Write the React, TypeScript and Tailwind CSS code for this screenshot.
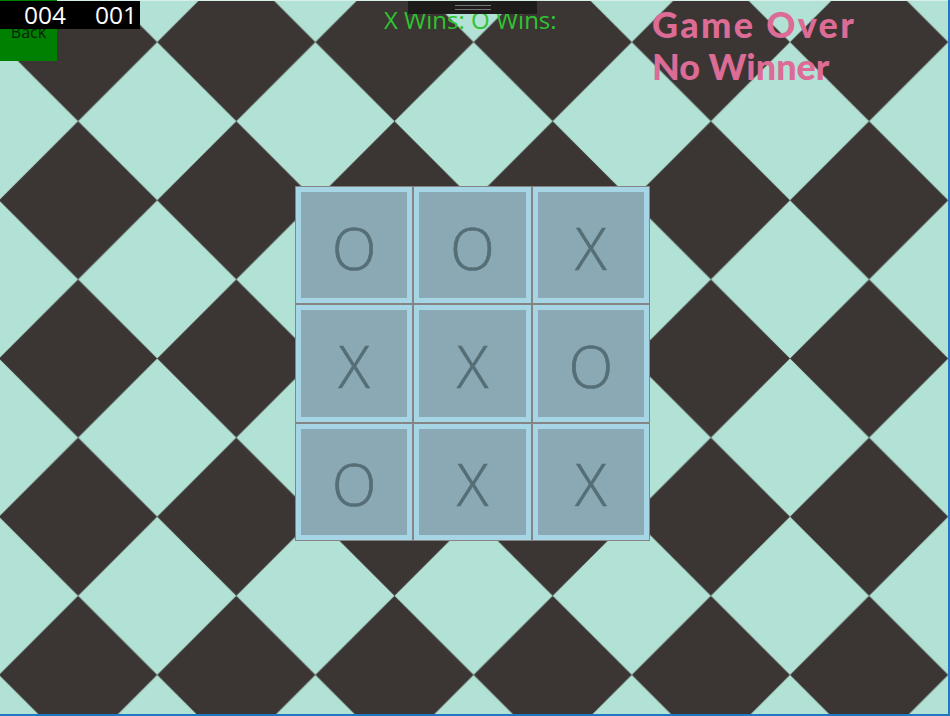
const cells = ["O", "O", "X", "X", "X", "O", "O", "X", "X"];

function Background() {
  return (
    <svg className="absolute inset-0 h-full w-full" aria-hidden="true">
      <defs>
        <pattern id="diamonds" x="-1" y="-37" width="158.2" height="158.2" patternUnits="userSpaceOnUse">
          <rect width="158.2" height="158.2" fill="#b2e2d5" />
          <path d="M79.1 0L158.2 79.1L79.1 158.2L0 79.1Z" fill="#3b3533" />
        </pattern>
      </defs>
      <rect width="100%" height="100%" fill="url(#diamonds)" />
    </svg>
  );
}

export default function App() {
  return (
    <div className="relative h-[716px] w-[950px] overflow-hidden border-r-2 border-b-2 border-[#1f78c1] font-['Open_Sans',sans-serif]">
      <Background />
      <div className="absolute inset-x-0 top-0 h-px bg-[#d8efe9]" />
      <div className="relative flex h-[186px] items-start">
        <div className="relative h-[61px] w-[384px] shrink-0">
          <button className="h-[61px] w-[57px] bg-[#008000] pt-[3px] text-center text-[16px] leading-5 text-[#062006]">
            Back
          </button>
          <div className="absolute left-0 top-px flex h-[28px] w-[140px] items-center justify-between bg-black pl-[24px] pr-[3px] text-[24.5px] font-medium leading-[28px] text-white">
            <span>004</span>
            <span>001</span>
          </div>
        </div>
        <div className="relative mt-[5px] w-[268px] shrink-0 whitespace-nowrap text-[24px] leading-[30px] text-[#2fc42f]">
          X Wins: O Wins:
        </div>
        <div className="mt-[3px] font-['Lato',sans-serif] text-[36px] font-black leading-[42px] text-[#dc6b95]">
          <div className="tracking-[2.3px]">Game Over</div>
          <div>No Winner</div>
        </div>
        <div className="absolute left-[408px] top-px flex h-[13px] w-[129px] items-center justify-center bg-[#1e1c1b]">
          <div className="h-[5px] w-[36px] border-y border-[#77787a]" />
        </div>
      </div>
      <div className="relative ml-[295px] grid h-[355px] w-[355px] grid-cols-3 grid-rows-3">
        {cells.map((c, i) => (
          <div key={i} className="border border-[#858585]">
            <div className="flex h-full w-full items-center justify-center border-[5px] border-[#a6d5e6] bg-[#8aa9b5] pt-[5px] text-[58px] font-light leading-none text-[#566e76] [-webkit-text-stroke:0.7px_#566e76]">
              {c}
            </div>
          </div>
        ))}
      </div>
    </div>
  );
}
